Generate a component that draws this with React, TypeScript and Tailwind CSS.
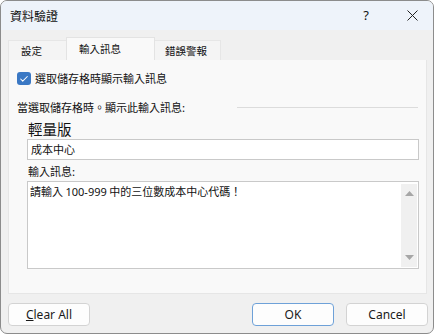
import { Check } from "lucide-react";

const cjk = { fontFamily: '"Noto Sans CJK TC", "Noto Sans", sans-serif' };
const ui = { fontFamily: '"Segoe UI", "Noto Sans", "Open Sans", sans-serif' };

function Button({ label, primary, underline }: { label: string; primary?: boolean; underline?: boolean }) {
  return (
    <div
      className={`flex h-[23px] w-[82px] items-center justify-center rounded-[4px] border bg-[#fdfdfd] text-[12px] text-[#1a1a1a] ${
        primary ? "border-[#6ea1d8]" : "border-[#d3d3d3]"
      }`}
      style={ui}
    >
      {underline ? (
        <span>
          <span className="underline">{label[0]}</span>
          {label.slice(1)}
        </span>
      ) : (
        label
      )}
    </div>
  );
}

export default function App() {
  return (
    <div className="h-[336px] w-[436px] bg-white">
      <div className="flex h-[334px] w-[434px] flex-col overflow-hidden rounded-[7px] border border-[#8c8c8c] bg-[#f0f0f0]">
        {/* title bar */}
        <div className="flex h-[29px] shrink-0 items-center bg-[#eef3fa]">
          <span className="ml-[9px] text-[12px] leading-none text-[#111]" style={cjk}>
            資料驗證
          </span>
          <span className="ml-auto mr-[38px] text-[13px] leading-none text-[#111]" style={ui}>
            ?
          </span>
          <svg width="11" height="11" viewBox="0 0 11 11" className="mr-[15px]">
            <path d="M0.5 0.5 L10.5 10.5 M10.5 0.5 L0.5 10.5" stroke="#222" strokeWidth="1" />
          </svg>
        </div>

        {/* tabs + panel */}
        <div className="flex shrink-0 flex-col pl-[7px] pt-[7px]">
          <div className="flex h-[23px] items-end text-[10.5px] text-[#111]" style={cjk}>
            <div className="flex h-[20px] w-[58px] items-center border-l border-t border-[#e6e6e6] bg-[#f4f4f4] pl-[12px]">
              設定
            </div>
            <div className="flex h-[23px] w-[89px] items-center border-x border-t border-[#e3e3e3] bg-[#f9f9f9] pl-[12px]">
              輸入訊息
            </div>
            <div className="flex h-[20px] w-[66px] items-center border-r border-t border-[#e6e6e6] bg-[#f4f4f4] pl-[10px]">
              錯誤警報
            </div>
          </div>

          <div
            className="flex h-[234px] w-[419px] flex-col border border-t-0 border-[#e6e6e6] bg-[#f9f9f9] pt-[12px] text-[11px] text-[#111]"
            style={cjk}
          >
            <div className="ml-[8px] flex h-[13px] items-center">
              <div className="flex h-[13px] w-[14px] items-center justify-center rounded-[3px] bg-[#3a78c4]">
                <Check className="h-[10px] w-[10px] text-white" strokeWidth={2.5} />
              </div>
              <span className="ml-[4px] leading-none">選取儲存格時顯示輸入訊息</span>
            </div>

            <div className="mt-[15px] flex h-[14px] items-center pl-[8px] pr-[8px]">
              <span className="leading-none">當選取儲存格時。顯示此輸入訊息:</span>
              <div className="ml-auto h-px w-[181px] bg-[#dcdcdc]" />
            </div>

            <div className="ml-[19px] mt-[5px] h-[20px] text-[14.5px] leading-[20px]">輕量版</div>

            <div className="ml-[18px] flex h-[21px] w-[392px] items-center border border-[#c9c9c9] bg-white pl-[3px]">
              <span className="leading-none">成本中心</span>
            </div>

            <div className="ml-[19px] mt-[4px] h-[14px] leading-[14px]">輸入訊息:</div>

            <div className="ml-[18px] mt-[3px] flex h-[88px] w-[392px] border border-[#c9c9c9] bg-white">
              <div className="flex-1 pl-[2px] pt-[2px] leading-[14px]">
                請輸入 <span style={ui}>100-999</span> 中的三位數成本中心代碼！
              </div>
              <div className="mb-[1px] mr-[1px] mt-[2px] flex w-[16px] flex-col items-center justify-between bg-[#f0f0f0] py-[7px]">
                <svg width="9" height="5" viewBox="0 0 9 5">
                  <path d="M0 5 L4.5 0 L9 5 Z" fill="#a6a6a6" />
                </svg>
                <svg width="9" height="5" viewBox="0 0 9 5">
                  <path d="M0 0 L4.5 5 L9 0 Z" fill="#a6a6a6" />
                </svg>
              </div>
            </div>
          </div>
        </div>

        {/* buttons */}
        <div className="mt-[9px] flex shrink-0 pl-[7px]">
          <Button label="Clear All" underline />
          <div className="ml-[162px] flex gap-[12px]">
            <Button label="OK" primary />
            <Button label="Cancel" />
          </div>
        </div>
      </div>
    </div>
  );
}
